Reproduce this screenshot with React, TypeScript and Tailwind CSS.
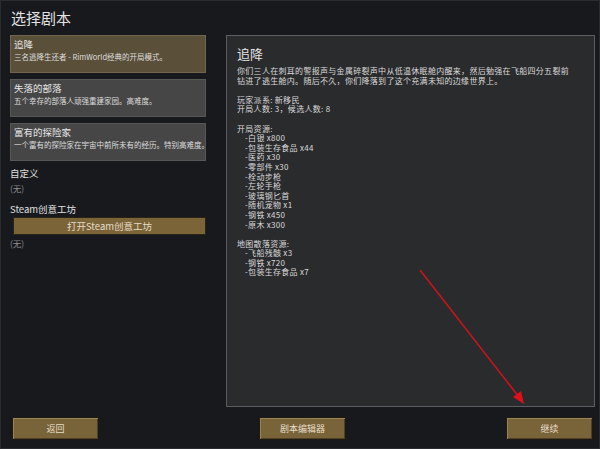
import React from "react";

const scenarios = [
  {
    title: "追降",
    desc: "三名逃降生还者 - RimWorld经典的开局模式。",
    selected: true,
  },
  {
    title: "失落的部落",
    desc: "五个幸存的部落人顽强重建家园。高难度。",
    selected: false,
  },
  {
    title: "富有的探险家",
    desc: "一个富有的探险家在宇宙中前所未有的经历。特别高难度。",
    selected: false,
  },
];

const startItems = [
  "白银 x800",
  "包装生存食品 x44",
  "医药 x30",
  "零部件 x30",
  "栓动步枪",
  "左轮手枪",
  "玻璃钢匕首",
  "随机宠物 x1",
  "钢铁 x450",
  "原木 x300",
];

const mapItems = ["飞船残骸 x3", "钢铁 x720", "包装生存食品 x7"];

function GameButton({ label }: { label: string }) {
  return (
    <button className="w-[87px] h-[23px] bg-[#79643a] border border-[#1e1a12] shadow-[inset_1px_1px_0_#9a8356,inset_-1px_-1px_0_#4e4027] text-[9px] text-[#e6dcc8]">
      {label}
    </button>
  );
}

export default function App() {
  return (
    <div
      className="relative w-[600px] h-[449px] bg-[#17191d] border border-[#2a2c31] text-[#dcdcdc] overflow-hidden"
      style={{ fontFamily: '"Noto Sans CJK SC", "Noto Sans", sans-serif' }}
    >
      <div className="h-[34px] pl-[10px] flex items-center text-[15px] text-[#e4e4e4]">
        选择剧本
      </div>

      <div className="flex">
        {/* left column */}
        <div className="ml-[9px] w-[196px] flex flex-col">
          {scenarios.map((s, idx) => (
            <div
              key={s.title}
              className={`h-[38px] px-[3px] pt-[2px] border ${idx < 2 ? "mb-[6px]" : ""} ${
                s.selected
                  ? "bg-[#5a4f39] border-[#6f6550]"
                  : "bg-[#464646] border-[#575757]"
              }`}
            >
              <div className="text-[9.5px] leading-[13px] text-[#e8e8e8]">{s.title}</div>
              <div className="text-[7.5px] leading-[12px] text-[#dedede] whitespace-nowrap">
                {s.desc}
              </div>
            </div>
          ))}
          <div className="mt-[5px] text-[9.5px] leading-[14px] text-[#e0e0e0]">自定义</div>
          <div className="mt-[2px] text-[8.5px] leading-[12px] text-[#8a8a8a]">(无)</div>
          <div className="mt-[8px] text-[9.5px] leading-[14px] text-[#e0e0e0]">Steam创意工坊</div>
          <button className="mt-[1px] ml-[3px] w-[193px] h-[18px] bg-[#7a6438] border border-[#2a2418] text-[9.5px] text-[#e6dcc8]">
            打开Steam创意工坊
          </button>
          <div className="mt-[2px] text-[8.5px] leading-[12px] text-[#8a8a8a]">(无)</div>
        </div>

        {/* right panel */}
        <div className="ml-[20px] w-[369px] h-[372px] bg-[#2a2b2d] border border-[#5c5d60] pl-[10px] pt-[8px]">
          <div className="text-[13px] leading-[20px] text-[#e6e6e6]">追降</div>
          <div className="mt-[2px] text-[8px] leading-[9.6px] text-[#dadada] tracking-[0.3px]">
            <div>你们三人在刺耳的警报声与金属碎裂声中从低温休眠舱内醒来，然后勉强在飞船四分五裂前</div>
            <div>钻进了逃生舱内。随后不久，你们降落到了这个充满未知的边缘世界上。</div>
            <div className="h-[9.6px]" />
            <div>玩家派系: 新移民</div>
            <div>开局人数: 3，候选人数: 8</div>
            <div className="h-[9.6px]" />
            <div>开局资源:</div>
            {startItems.map((i) => (
              <div key={i} className="pl-[8px]">
                -{i}
              </div>
            ))}
            <div className="h-[9.6px]" />
            <div>地图散落资源:</div>
            {mapItems.map((i) => (
              <div key={i} className="pl-[8px]">
                -{i}
              </div>
            ))}
          </div>
        </div>
      </div>

      {/* bottom buttons */}
      <div className="mt-[10px] pl-[11px] pr-[6px] flex justify-between">
        <GameButton label="返回" />
        <GameButton label="剧本编辑器" />
        <GameButton label="继续" />
      </div>

      {/* annotation arrow */}
      <svg className="absolute left-0 top-0 pointer-events-none" width="600" height="449">
        <line x1="419" y1="269" x2="518" y2="396" stroke="#c8141c" strokeWidth="1.6" />
        <polygon points="523,403 512,396 520,390" fill="#e01018" />
      </svg>
    </div>
  );
}
